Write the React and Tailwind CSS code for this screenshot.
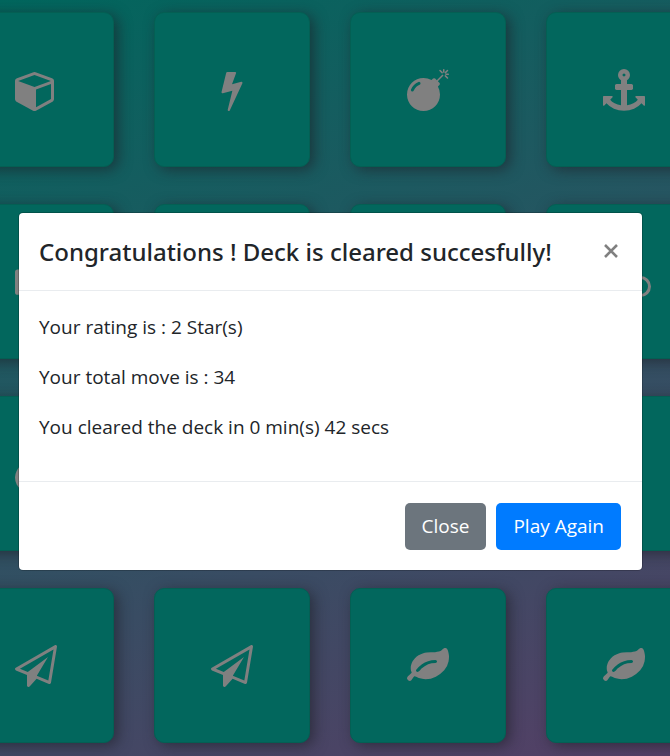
const icons = {
  cube: "M896 1629l640-349v-636l-640 233v752zm-64-865l698-254-698-254-698 254zm832-252v768q0 35-18 65t-49 47l-704 384q-28 16-61 16t-61-16l-704-384q-31-17-49-47t-18-65v-768q0-40 23-73t61-47l704-256q22-8 44-8t44 8l704 256q38 14 61 47t23 73z",
  bolt: "M1333 566q18 20 7 44l-540 1157q-13 25-42 25-4 0-14-2-17-5-25.5-19t-4.5-30l197-808-406 101q-4 1-12 1-18 0-31-11-18-15-13-39l201-825q4-16 18-26t32-10h328q19 0 32 12.5t13 29.5q0 8-5 18l-171 463 396-98q8-2 12-2 19 0 34 15z",
  bomb: "M571 589q-10-25-34-35t-49 0q-108 44-191 127t-127 191q-10 25 0 49t35 34q13 5 24 5 42 0 60-40 34-84 98.5-148.5t148.5-98.5q25-11 35-35t0-49zm942-356l46 46-244 243 68 68q19 19 19 45.5t-19 45.5l-64 64q89 161 89 343 0 143-55.5 273.5t-150 225-225 150-273.5 55.5-273.5-55.5-225-150-150-225-55.5-273.5 55.5-273.5 150-225 225-150 273.5-55.5q182 0 343 89l64-64q19-19 45.5-19t45.5 19l68 68zm8-56q-10 10-22 10-13 0-23-10l-91-90q-9-10-9-23t9-23q10-9 23-9t23 9l90 91q10 9 10 22.5t-10 22.5zm230 230q-11 9-23 9t-23-9l-90-91q-10-9-10-22.5t10-22.5q9-10 22.5-10t22.5 10l91 90q9 10 9 23t-9 23zm41-183q0 14-9 23t-23 9h-96q-14 0-23-9t-9-23 9-23 23-9h96q14 0 23 9t9 23zm-192-192v96q0 14-9 23t-23 9-23-9-9-23v-96q0-14 9-23t23-9 23 9 9 23zm151 55l-91 90q-10 10-22 10-13 0-23-10-10-9-10-22.5t10-22.5l90-91q10-9 23-9t23 9q9 10 9 23t-9 23z",
  anchor: "M960 256q0-26-19-45t-45-19-45 19-19 45 19 45 45 19 45-19 19-45zm832 928v352q0 22-20 30-8 2-12 2-12 0-23-9l-93-93q-119 143-318.5 226.5t-429.5 83.5-429.5-83.5-318.5-226.5l-93 93q-9 9-23 9-4 0-12-2-20-8-20-30v-352q0-14 9-23t23-9h352q22 0 30 20 8 19-7 35l-100 100q67 91 189.5 153.5t271.5 82.5v-647h-192q-26 0-45-19t-19-45v-128q0-26 19-45t45-19h192v-163q-58-34-93-92.5t-35-128.5q0-106 75-181t181-75 181 75 75 181q0 70-35 128.5t-93 92.5v163h192q26 0 45 19t19 45v128q0 26-19 45t-45 19h-192v647q149-20 271.5-82.5t189.5-153.5l-100-100q-15-16-7-35 8-20 30-20h352q14 0 23 9t9 23z",
  plane: "M1764 11q33 24 27 64l-256 1536q-5 29-32 45-14 8-31 8-11 0-24-5l-527-215-298 327q-18 21-47 21-14 0-23-4-19-7-30-23.5t-11-36.5v-452l-472-193q-37-14-40-55-3-39 32-59l1664-960q35-21 68 2zm-342 1499l221-1323-1434 827 336 137 863-639-478 797z",
  leaf: "M1280 704q0-26-19-45t-45-19q-172 0-318 49.5t-259.5 134-235.5 219.5q-19 21-19 45 0 26 19 45t45 19q24 0 45-19 27-24 74-71t67-66q137-124 268.5-176t313.5-52q26 0 45-19t19-45zm512-198q0 95-20 193-46 224-184.5 383t-357.5 268q-214 108-438 108-148 0-286-47-15-5-88-42t-96-37q-16 0-39.5 32t-45 70-52.5 70-60 32q-43 0-63.5-17.5t-45.5-59.5q-2-4-6-11t-5.5-10-3-9.5-1.5-13.5q0-35 31-73.5t68-65.5 68-56 31-48q0-4-14-38t-16-44q-9-51-9-104 0-115 43.5-220t119-184.5 170.5-139 204-95.5q55-18 145-25.5t179.5-9 178.5-6 163.5-24 113.5-56.5l29.5-29.5 29.5-28 27-20 36.5-16 43.5-4.5q39 0 70.5 46t47.5 112 24 124 8 96z",
};

const deck = [
  "cube", "bolt", "bomb", "anchor",
  "block", "bolt", "bomb", "bicycle",
  "disc", "cube", "anchor", "cube",
  "plane", "plane", "leaf", "leaf",
];

function Icon({ name }) {
  if (name === "bicycle") {
    return (
      <svg viewBox="0 0 54 42" className="h-[42px] w-[54px] shrink-0" fill="none" stroke="currentColor" strokeWidth="3">
        <circle cx="10.5" cy="25.5" r="9" />
        <circle cx="43.5" cy="25.5" r="9" />
        <path d="M10.5 26 18 13h18l-12 13H10.5M43.5 26 34 8h6M24 26 17 9h-5" />
      </svg>
    );
  }
  return (
    <svg viewBox="0 0 1792 1792" className="size-[42px] shrink-0" fill="currentColor">
      {name === "block" && <rect x="0" y="363" width="1792" height="1080" rx="110" />}
      {name === "disc" && <ellipse cx="896" cy="1050" rx="896" ry="740" />}
      {icons[name] && <path d={icons[name]} />}
    </svg>
  );
}

function Card({ icon }) {
  return (
    <li className="flex h-[155px] items-center justify-center rounded-[10px] border border-[#045f53] bg-[#02675d] text-[#808080] shadow-[4px_3px_14px_rgba(30,30,38,0.6)]">
      <Icon name={icon} />
    </li>
  );
}

export default function App() {
  return (
    <div className="relative h-screen overflow-hidden bg-[linear-gradient(160deg,#01665d_0%,#553f66_100%)] font-['Open_Sans','Noto_Sans',sans-serif] text-[19px] text-[#212529]">
      <div className="flex justify-center pt-3">
        <ul className="-ml-[10px] grid shrink-0 grid-cols-[repeat(4,156px)] gap-x-10 gap-y-[37px]">
          {deck.map((icon, i) => (
            <Card key={i} icon={icon} />
          ))}
        </ul>
      </div>

      <div className="absolute top-[213px] right-7 left-[19px]">
        <section role="dialog" aria-modal="true" aria-labelledby="dialog-title" className="rounded bg-white shadow-[0_0_0_1px_rgba(0,0,0,0.2)]">
          <header className="flex items-start justify-between border-b border-[#e9ecef] p-5">
            <h1 id="dialog-title" className="font-['Noto_Sans',sans-serif] text-2xl leading-[37px] font-medium">
              Congratulations ! Deck is cleared succesfully!
            </h1>
            <button type="button" aria-label="Close dialog" className="-mr-[7px] flex size-9 items-center justify-center text-[#808080]">
              <svg viewBox="0 0 14 14" className="size-[14px]" fill="none" stroke="currentColor" strokeWidth="2.6">
                <path d="m1 1 12 12M13 1 1 13" />
              </svg>
            </button>
          </header>
          <div className="space-y-5 px-5 pt-[21px] pb-[39px] leading-[30px]">
            <p>Your rating is : 2 Star(s)</p>
            <p>Your total move is : 34</p>
            <p>You cleared the deck in 0 min(s) 42 secs</p>
          </div>
          <footer className="flex justify-end gap-[10px] border-t border-[#e9ecef] px-[21px] pt-[21px] pb-5 text-white">
            <button type="button" className="h-[47px] rounded-[5px] bg-[#6c757d] px-[17px]">Close</button>
            <button type="button" className="h-[47px] rounded-[5px] bg-[#007bff] px-[17px]">Play Again</button>
          </footer>
        </section>
      </div>
    </div>
  );
}
